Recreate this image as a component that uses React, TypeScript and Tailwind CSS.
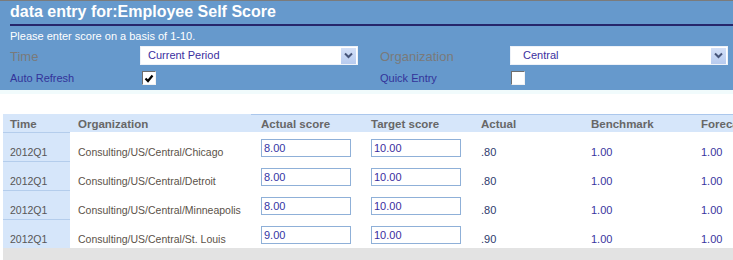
import React from "react";

type Row = {
  time: string;
  org: string;
  actualScore: string;
  targetScore: string;
  actual: string;
  benchmark: string;
  forecast: string;
};

const rows: Row[] = [
  { time: "2012Q1", org: "Consulting/US/Central/Chicago", actualScore: "8.00", targetScore: "10.00", actual: ".80", benchmark: "1.00", forecast: "1.00" },
  { time: "2012Q1", org: "Consulting/US/Central/Detroit", actualScore: "8.00", targetScore: "10.00", actual: ".80", benchmark: "1.00", forecast: "1.00" },
  { time: "2012Q1", org: "Consulting/US/Central/Minneapolis", actualScore: "8.00", targetScore: "10.00", actual: ".80", benchmark: "1.00", forecast: "1.00" },
  { time: "2012Q1", org: "Consulting/US/Central/St. Louis", actualScore: "9.00", targetScore: "10.00", actual: ".90", benchmark: "1.00", forecast: "1.00" },
];

const Select = ({ value, textPad }: { value: string; textPad: string }) => (
  <div className="flex h-[19px] w-[218px] items-center border border-[#eef2f8] bg-white">
    <span className={`flex-1 text-[11px] leading-[17px] text-[#3b2fa0] ${textPad}`}>{value}</span>
    <span className="mr-px flex h-[16px] w-[15px] items-center justify-center bg-gradient-to-b from-[#d3e0f8] to-[#b7cbef]">
      <svg width="9" height="7" viewBox="0 0 9 7">
        <path d="M1 1.5 L4.5 5 L8 1.5" fill="none" stroke="#46557a" strokeWidth="2" />
      </svg>
    </span>
  </div>
);

const Checkbox = ({ checked }: { checked?: boolean }) => (
  <div className="flex h-[14px] w-[14px] items-center justify-center border border-l-[#6e6e6e] border-t-[#6e6e6e] border-r-[#f2f2f2] border-b-[#f2f2f2] bg-white">
    {checked && (
      <svg width="10" height="9" viewBox="0 0 10 9">
        <path d="M1.5 4.5 L4 7 L8.5 1.5" fill="none" stroke="#000" strokeWidth="2.2" />
      </svg>
    )}
  </div>
);

const App = () => {
  return (
    <div className="h-[260px] w-[733px] overflow-hidden bg-white font-['Liberation_Sans',Arial,sans-serif]">
      <div className="h-px bg-[#7b7b7b]" />
      <div className="h-[89px] bg-[#6699cc]">
        <h1 className="h-[23px] pl-[10px] pt-px text-[16px] font-bold leading-[20px] text-white">
          data entry for:Employee Self Score
        </h1>
        <div className="ml-[10px] h-[2px] bg-[#26266b]" />
        <p className="mt-[4px] pl-[10px] text-[11px] leading-[13px] text-white">
          Please enter score on a basis of 1-10.
        </p>
        <div className="mt-[3px] flex h-[19px] items-center pl-[10px]">
          <span className="w-[130px] pt-[3px] text-[13px] leading-[16px] text-[#7a7a7a]">Time</span>
          <Select value="Current Period" textPad="pl-[7px]" />
          <span className="ml-[22px] w-[130px] pt-[3px] text-[13px] leading-[16px] text-[#7a7a7a]">Organization</span>
          <Select value="Central" textPad="pl-[12px]" />
        </div>
        <div className="mt-[6px] flex h-[14px] items-center pl-[10px]">
          <span className="w-[132px] text-[11px] leading-[13px] text-[#33339a]">Auto Refresh</span>
          <Checkbox checked />
          <span className="ml-[224px] w-[131px] text-[11px] leading-[13px] text-[#33339a]">Quick Entry</span>
          <Checkbox />
        </div>
      </div>
      <div className="h-[4px] bg-[#f1fbfc]" />

      <div className="mt-[20px] ml-[3px] w-[800px]">
        <div className="flex h-[18px] bg-[#d6e6fa] text-[11.5px] font-bold leading-[14px] text-[#676767]">
          <div className="flex w-[67px] items-center border-t border-[#d6e6fa] pl-[7px]">Time</div>
          <div className="flex w-[181px] items-center border-t border-[#d6e6fa] pl-[8px]">Organization</div>
          <div className="flex w-[110px] items-center border-t border-[#abc7ec] pl-[10px]">Actual score</div>
          <div className="flex w-[110px] items-center border-t border-[#abc7ec] pl-[10px]">Target score</div>
          <div className="flex w-[110px] items-center border-t border-[#abc7ec] pl-[10px]">Actual</div>
          <div className="flex w-[110px] items-center border-t border-[#abc7ec] pl-[10px]">Benchmark</div>
          <div className="flex w-[110px] items-center border-t border-[#abc7ec] pl-[10px]">Forecast</div>
        </div>
        {rows.map((r, i) => (
          <div key={i} className="flex h-[29px] text-[10.5px] leading-[14px]">
            <div className="w-[67px] border-t border-[#b4cdec] bg-[#d6e6fa] pl-[7px] pt-[12px] text-[#565656]">{r.time}</div>
            <div className="w-[181px] border-t border-white pl-[8px] pt-[12px] text-[#5b5249]">{r.org}</div>
            <div className="w-[110px] border-t border-white pl-[10px] pt-[6px]">
              <div className="h-[18px] w-[90px] border border-[#8fb0d8] pl-[2px] text-[11px] leading-[16px] text-[#3535a5]">
                {r.actualScore}
              </div>
            </div>
            <div className="w-[110px] border-t border-white pl-[10px] pt-[6px]">
              <div className="h-[18px] w-[90px] border border-[#8fb0d8] pl-[2px] text-[11px] leading-[16px] text-[#3a2c9e]">
                {r.targetScore}
              </div>
            </div>
            <div className="w-[110px] border-t border-white pl-[10px] pt-[12px] text-[11px] text-[#2e3a6c]">{r.actual}</div>
            <div className="w-[110px] border-t border-white pl-[10px] pt-[12px] text-[11px] text-[#3a34a0]">{r.benchmark}</div>
            <div className="w-[110px] border-t border-white pl-[10px] pt-[12px] text-[11px] text-[#3a34a0]">{r.forecast}</div>
          </div>
        ))}
        <div className="h-[20px] bg-[#e3e3e3]" />
      </div>
    </div>
  );
};

export default App;
